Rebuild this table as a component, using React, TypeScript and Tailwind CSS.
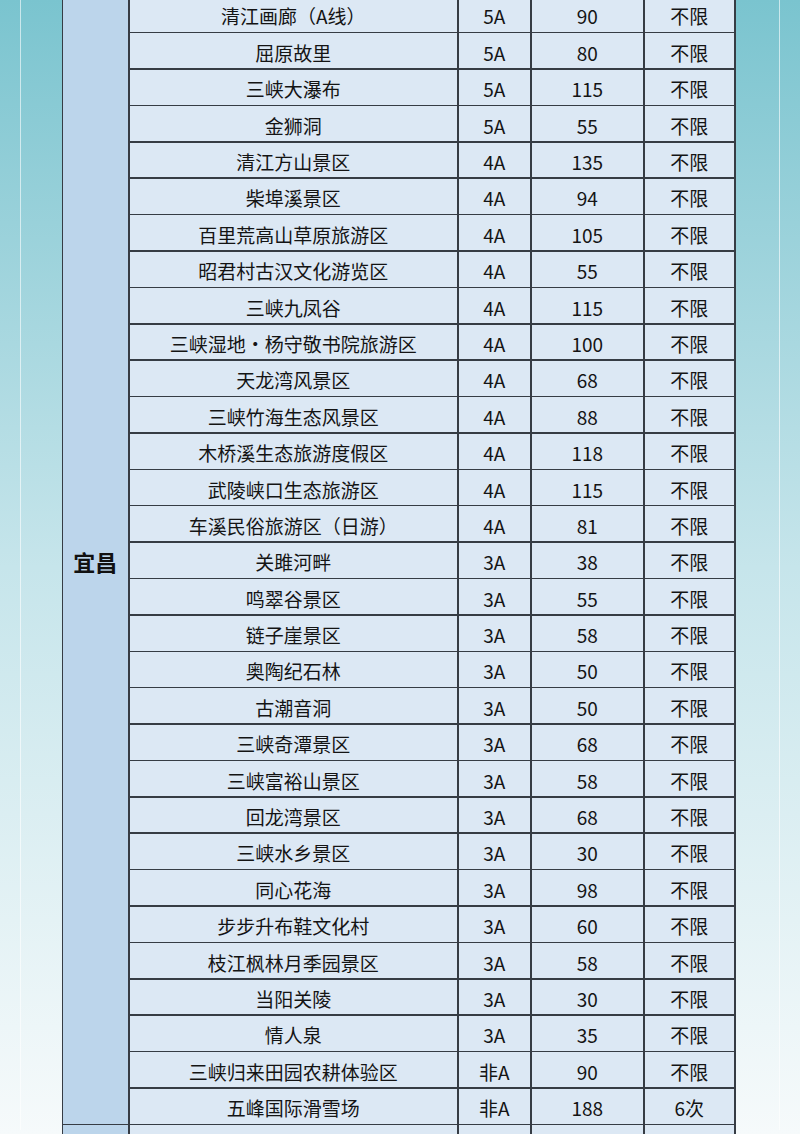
const rows: [string, string, string, string][] = [
  ['清江画廊（A线）', '5A', '90', '不限'],
  ['屈原故里', '5A', '80', '不限'],
  ['三峡大瀑布', '5A', '115', '不限'],
  ['金狮洞', '5A', '55', '不限'],
  ['清江方山景区', '4A', '135', '不限'],
  ['柴埠溪景区', '4A', '94', '不限'],
  ['百里荒高山草原旅游区', '4A', '105', '不限'],
  ['昭君村古汉文化游览区', '4A', '55', '不限'],
  ['三峡九凤谷', '4A', '115', '不限'],
  ['三峡湿地•杨守敬书院旅游区', '4A', '100', '不限'],
  ['天龙湾风景区', '4A', '68', '不限'],
  ['三峡竹海生态风景区', '4A', '88', '不限'],
  ['木桥溪生态旅游度假区', '4A', '118', '不限'],
  ['武陵峡口生态旅游区', '4A', '115', '不限'],
  ['车溪民俗旅游区（日游）', '4A', '81', '不限'],
  ['关雎河畔', '3A', '38', '不限'],
  ['鸣翠谷景区', '3A', '55', '不限'],
  ['链子崖景区', '3A', '58', '不限'],
  ['奥陶纪石林', '3A', '50', '不限'],
  ['古潮音洞', '3A', '50', '不限'],
  ['三峡奇潭景区', '3A', '68', '不限'],
  ['三峡富裕山景区', '3A', '58', '不限'],
  ['回龙湾景区', '3A', '68', '不限'],
  ['三峡水乡景区', '3A', '30', '不限'],
  ['同心花海', '3A', '98', '不限'],
  ['步步升布鞋文化村', '3A', '60', '不限'],
  ['枝江枫林月季园景区', '3A', '58', '不限'],
  ['当阳关陵', '3A', '30', '不限'],
  ['情人泉', '3A', '35', '不限'],
  ['三峡归来田园农耕体验区', '非A', '90', '不限'],
  ['五峰国际滑雪场', '非A', '188', '6次'],
]

const cell =
  'flex h-[34.9px] items-center justify-center bg-[#dce8f4] pt-[3px] text-[19px] leading-none text-[#141414]'

export default function App() {
  return (
    <div
      className="h-[1134px] overflow-hidden bg-gradient-to-b from-[#7ac4cf] via-[#c6e5eb] to-[#f6fafb] px-[20px]"
      style={{ fontFamily: '"Noto Sans CJK SC", "Noto Sans", sans-serif' }}
    >
      <div className="h-full border-x-[1.5px] border-white/60">
        <div className="ml-[40.5px] mt-[-4px] grid w-[674.5px] grid-cols-[65.5px_327.5px_71.5px_111.5px_89.5px] gap-[1.5px] border-[1.5px] border-[#363c44] bg-[#363c44]">
          <div className="row-[span_31/span_31] flex items-center justify-center bg-[#bcd5eb] pt-[2px] text-[22px] font-bold text-[#111]">
            宜昌
          </div>
          {rows.map(([name, grade, price, limit], i) => (
            <div key={i} className="contents">
              <div className={cell}>{name}</div>
              <div className={cell}>{grade}</div>
              <div className={cell}>{price}</div>
              <div className={cell}>{limit}</div>
            </div>
          ))}
          <div className="h-[34.9px] bg-[#bcd5eb]" />
          <div className={cell} />
          <div className={cell} />
          <div className={cell} />
          <div className={cell} />
        </div>
      </div>
    </div>
  )
}
